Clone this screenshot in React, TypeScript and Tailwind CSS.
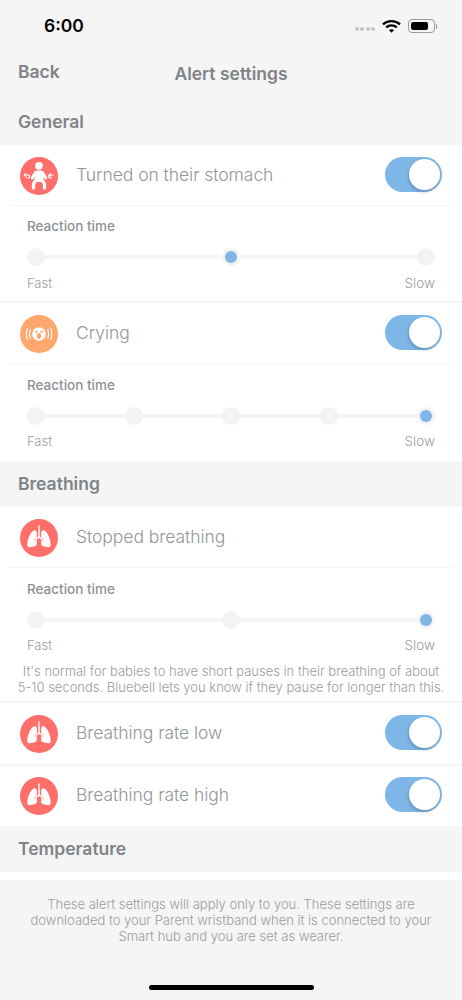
import React from "react";

const font = { fontFamily: "Inter, 'Liberation Sans', sans-serif" };

function Baby() {
  return (
    <svg viewBox="0 0 38 38" className="w-[38px] h-[38px] shrink-0">
      <circle cx="19" cy="19" r="19" fill="#ff6f69" />
      <circle cx="19" cy="8.800" r="3.900" fill="#fff" />
      <rect x="14.500" y="13.500" width="9" height="11.500" rx="2.500" fill="#fff" />
      <g fill="none" stroke="#fff" strokeLinecap="round">
        <path d="M15.500 15.500l-3.300 5.500M22.500 15.500l3.300 5.500" strokeWidth="2.700" />
        <path d="M15.800 23.500c-1.500 1.500-2.300 3-2.300 4.500v3M22.200 23.500c1.500 1.500 2.300 3 2.300 4.500v3" strokeWidth="3.300" />
      </g>
      <g fill="none" stroke="#fff" strokeWidth="1.200">
        <path d="M4.500 18h4c1.500 0 1.500 3-.5 3H6" />
        <path d="M6 16.300L4.300 18 6 19.700" />
        <path d="M33.500 18h-4c-1.500 0-1.500 3 .5 3h2" />
        <path d="M31 16.300l-1.700 1.700 1.700 1.700" />
      </g>
    </svg>
  );
}

function Cry() {
  return (
    <svg viewBox="0 0 38 38" className="w-[38px] h-[38px] shrink-0">
      <circle cx="19" cy="19" r="19" fill="#ffa76d" />
      <circle cx="19" cy="19" r="6.800" fill="#fff" />
      <circle cx="16.400" cy="16.700" r="1.200" fill="#ffa76d" />
      <circle cx="21.600" cy="16.700" r="1.200" fill="#ffa76d" />
      <ellipse cx="19" cy="21" rx="2.100" ry="2.900" fill="#ffa76d" />
      <g fill="none" stroke="#fff" strokeWidth="1.100" strokeLinecap="round">
        <path d="M10.200 14.500c-1.100 3-1.100 6 0 9" />
        <path d="M7.300 13.500c-1.300 3.600-1.300 7.400 0 11" />
        <path d="M27.800 14.500c1.100 3 1.100 6 0 9" />
        <path d="M30.700 13.500c1.300 3.600 1.300 7.400 0 11" />
      </g>
    </svg>
  );
}

function Lungs() {
  return (
    <svg viewBox="0 0 38 38" className="w-[38px] h-[38px] shrink-0">
      <circle cx="19" cy="19" r="19" fill="#ff6f69" />
      <g fill="#fff">
        <path d="M13.800 11.500c1.600-.6 3 .3 3 2.200v4.600l-2.300 2.400 1 1 1.300-1.300v4.400c0 1.500-1 2.200-2.500 2.500l-4.300.9c-1.700.3-2.700-.7-2.700-2.400 0-5 3-12.800 6.500-14.300z" />
        <path d="M24.200 11.500c-1.600-.6-3 .3-3 2.200v4.600l2.300 2.400-1 1-1.300-1.300v4.400c0 1.500 1 2.200 2.500 2.500l4.300.9c1.700.3 2.700-.7 2.700-2.400 0-5-3-12.800-6.500-14.300z" />
        <rect x="18.300" y="6.500" width="1.400" height="13" />
      </g>
      <path d="M19 17.500l-3.500 3.500M19 17.500l3.500 3.500" stroke="#fff" strokeWidth="1.100" fill="none" />
    </svg>
  );
}

function Toggle() {
  return (
    <div className="relative w-[57px] h-[35px] -mt-[3px] rounded-full bg-[#7fb6e8] shrink-0">
      <div className="absolute right-[2px] top-[2px] w-[31px] h-[31px] rounded-full bg-white shadow-[-1px_2px_3px_rgba(60,90,120,0.35)]" />
    </div>
  );
}

function Row({ icon, label, toggle, divider, short }: { icon: React.ReactNode; label: string; toggle?: boolean; divider?: boolean; short?: boolean }) {
  return (
    <div className="px-[9px] bg-white">
      <div className={(short ? "h-[60px]" : "h-[61px]") + " flex items-center pl-[11px] pr-[11px] " + (divider ? "pt-[2px] border-b border-[#f5f5f5]" : "")}>
        {icon}
        <span className="ml-[18px] -mt-[1px] flex-1 text-[17.500px] font-light text-[#93969a] tracking-[-0.05px]">{label}</span>
        {toggle && <Toggle />}
      </div>
    </div>
  );
}

function Slider({ stops, active, roomy, flush }: { stops: number; active: number; roomy?: boolean; flush?: boolean }) {
  return (
    <div className={"bg-white px-[27px] " + (roomy ? "pt-[12px] " : "pt-[11px] ") + (flush ? "pb-0" : roomy ? "pb-[10px]" : "pb-[8px]")}>
      <div className="text-[13.500px] leading-[18px] font-medium text-[#8e9194]">Reaction time</div>
      <div className="relative h-[18px] mt-[13px] flex items-center justify-between">
        <div className="absolute left-0 right-0 top-[7px] h-[4px] bg-[#f5f5f5]" />
        {Array.from({ length: stops }).map((_, i) =>
          <div key={i} className="relative w-[18px] h-[18px] rounded-full bg-[#f3f3f3] flex items-center justify-center">
            {i === active && <div className="w-[12px] h-[12px] rounded-full bg-[#7fb6e8]" />}
          </div>
        )}
      </div>
      <div className={"flex justify-between text-[13px] leading-[20px] font-light text-[#9a9c9f] " + (roomy ? "mt-[6px]" : "mt-[7px]")}>
        <span>Fast</span>
        <span className="text-[13.500px]">Slow</span>
      </div>
    </div>
  );
}

function Section({ title }: { title: string }) {
  return (
    <div className="h-[46px] bg-[#f5f5f5] flex items-center px-[18px] text-[17.500px] font-semibold text-[#808387]">
      {title}
    </div>
  );
}

const Gap = () => <div className="h-[2px] bg-[#f5f5f5]" />;

export default function App() {
  return (
    <div style={font} className="w-[462px] h-[1000px] bg-white overflow-hidden flex flex-col">
      <div className="h-[99px] bg-[#f5f5f5] flex flex-col shrink-0">
        <div className="h-[50px] flex items-center justify-between pl-[44px] pr-[25px] pt-[2px]">
          <span className="text-[17.500px] font-semibold text-black">6:00</span>
          <div className="flex items-center">
            <div className="flex gap-[1.500px] mr-[7px] mt-[6px]">
              {[0, 1, 2, 3].map((i) => <div key={i} className="w-[4px] h-[4px] rounded-full bg-[#c4c4c4]" />)}
            </div>
            <svg viewBox="0 0 20 15" className="w-[19px] h-[15px] mr-[7px]">
              <path d="M1 5.200C6 .6 14 .6 19 5.200" fill="none" stroke="#000" strokeWidth="2.400" />
              <path d="M4.400 8.500c3.200-2.900 8-2.900 11.200 0" fill="none" stroke="#000" strokeWidth="2.400" />
              <path d="M7.300 11.300c1.600-1.300 3.800-1.300 5.400 0L10 14z" fill="#000" />
            </svg>
            <div className="w-[27px] h-[14px] rounded-[4px] border border-[#9a9a9a] p-[2px]">
              <div className="w-[17px] h-full rounded-[2px] bg-black" />
            </div>
            <div className="w-[1px] h-[5px] bg-[#9a9a9a] ml-[1px]" />
          </div>
        </div>
        <div className="relative h-[49px] flex items-center px-[18px] text-[#808387] font-semibold">
          <span className="text-[17.500px] -mt-[4px]">Back</span>
          <span className="absolute left-0 right-0 text-center text-[17.500px] -mt-[1px]">Alert settings</span>
        </div>
      </div>
      <Section title="General" />
      <Row icon={<Baby />} label="Turned on their stomach" toggle divider />
      <Slider stops={3} active={1} />
      <Gap />
      <Row icon={<Cry />} label="Crying" toggle divider />
      <Slider stops={5} active={4} roomy />
      <Section title="Breathing" />
      <Row icon={<Lungs />} label="Stopped breathing" divider />
      <Slider stops={3} active={2} roomy flush />
      <div className="bg-white px-[10px] pt-[8px] pb-[6px] text-center text-[13px] leading-[16px] font-light text-[#9a9c9f]">
        It's normal for babies to have short pauses in their breathing of about<br />5-10 seconds. Bluebell lets you know if they pause for longer than this.
      </div>
      <Gap />
      <Row icon={<Lungs />} label="Breathing rate low" toggle />
      <Gap />
      <Row icon={<Lungs />} label="Breathing rate high" toggle short />
      <Section title="Temperature" />
      <div className="h-[8px] bg-white shrink-0" />
      <div className="flex-1 bg-[#f5f5f5] flex flex-col items-center pt-[16px]">
        <p className="w-[420px] text-center text-[13px] leading-[16px] font-light text-[#9a9c9f]">
          These alert settings will apply only to you. These settings are downloaded to your Parent wristband when it is connected to your Smart hub and you are set as wearer.
        </p>
        <div className="mt-auto mb-[10px] w-[165px] h-[5px] rounded-full bg-black" />
      </div>
    </div>
  );
}
